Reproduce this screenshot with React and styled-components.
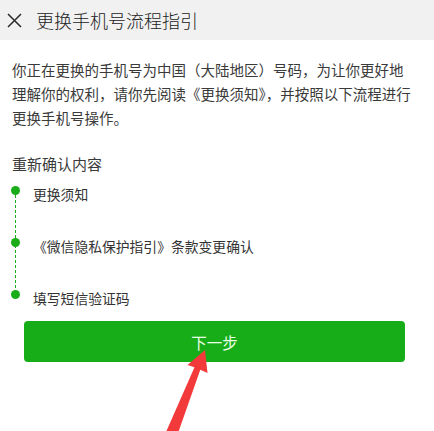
import React from "react";
import styled, { createGlobalStyle } from "styled-components";

const Global = createGlobalStyle`
  html, body { margin: 0; padding: 0; background: #ffffff; }
  body { font-family: "Noto Sans CJK SC", "Noto Sans", sans-serif; }
`;

const Page = styled.div`
  position: relative;
  width: 434px;
  height: 431px;
  overflow: hidden;
  background: #ffffff;
`;

const Header = styled.header`
  height: 40px;
  background: #f1f1f1;
  display: flex;
  align-items: center;
  padding-left: 7px;
  gap: 14px;
`;

const CloseButton = styled.span`
  display: flex;
  width: 15px;
  height: 15px;
`;

const Title = styled.h1`
  margin: 0;
  font-size: 18px;
  font-weight: 300;
  color: #222222;
  line-height: 24px;
`;

const Content = styled.main`
  padding: 18px 12px 0;
`;

const Intro = styled.p`
  margin: 0;
  font-size: 14.5px;
  line-height: 24px;
  color: #3a3a3a;
`;

const Line = styled.span`
  display: block;
  white-space: nowrap;
`;

const SectionTitle = styled.h2`
  margin: 22px 0 0;
  font-size: 15px;
  font-weight: 400;
  line-height: 24px;
  color: #3a3a3a;
`;

const Steps = styled.ol`
  position: relative;
  list-style: none;
  margin: 6px 0 0;
  padding: 0;
  display: flex;
  flex-direction: column;
  gap: 28px;

  &::before {
    content: "";
    position: absolute;
    left: 3px;
    top: 8px;
    bottom: 12px;
    width: 1px;
    background: repeating-linear-gradient(
      to bottom,
      #1aad19 0,
      #1aad19 3px,
      transparent 3px,
      transparent 5px
    );
  }
`;

const Step = styled.li`
  display: flex;
  align-items: flex-start;
  height: 24px;
  font-size: 13.8px;
  line-height: 24px;
  color: #333333;
`;

const Dot = styled.span`
  position: relative;
  z-index: 1;
  flex: none;
  width: 9px;
  height: 9px;
  margin: 3.5px 0 0 -1px;
  border-radius: 50%;
  background: #1aad19;
`;

const StepText = styled.span`
  margin-left: 13px;
`;

const NextButton = styled.button`
  display: flex;
  align-items: center;
  justify-content: center;
  margin: 11px 0 0 12px;
  width: 381px;
  height: 41px;
  border: none;
  border-radius: 4px;
  background: #17ad19;
  color: #e9ffe6;
  font-family: "Noto Sans CJK SC", "Noto Sans", sans-serif;
  font-size: 15.5px;
  padding: 0;
`;

const ArrowLayer = styled.svg`
  position: absolute;
  left: 0;
  top: 0;
  pointer-events: none;
`;

const steps = ["更换须知", "《微信隐私保护指引》条款变更确认", "填写短信验证码"];

export default function App() {
  return (
    <Page>
      <Global />
      <Header>
        <CloseButton>
          <svg width="15" height="15" viewBox="0 0 15 15">
            <path d="M1 1 L14 14 M14 1 L1 14" stroke="#2a2a2a" strokeWidth="1.5" fill="none" />
          </svg>
        </CloseButton>
        <Title>更换手机号流程指引</Title>
      </Header>
      <Content>
        <Intro>
          <Line>你正在更换的手机号为中国（大陆地区）号码，为让你更好地</Line>
          <Line>理解你的权利，请你先阅读《更换须知》，并按照以下流程进行</Line>
          <Line>更换手机号操作。</Line>
        </Intro>
        <SectionTitle>重新确认内容</SectionTitle>
        <Steps>
          {steps.map((s) => (
            <Step key={s}>
              <Dot />
              <StepText>{s}</StepText>
            </Step>
          ))}
        </Steps>
        <NextButton>下一步</NextButton>
      </Content>
      <ArrowLayer width="434" height="431" viewBox="0 0 434 431">
        <polygon
          points="205,350 207.5,373 200.3,369.8 177,436 166,432 194.5,367.2 187.5,365"
          fill="#f23a3a"
        />
      </ArrowLayer>
    </Page>
  );
}
